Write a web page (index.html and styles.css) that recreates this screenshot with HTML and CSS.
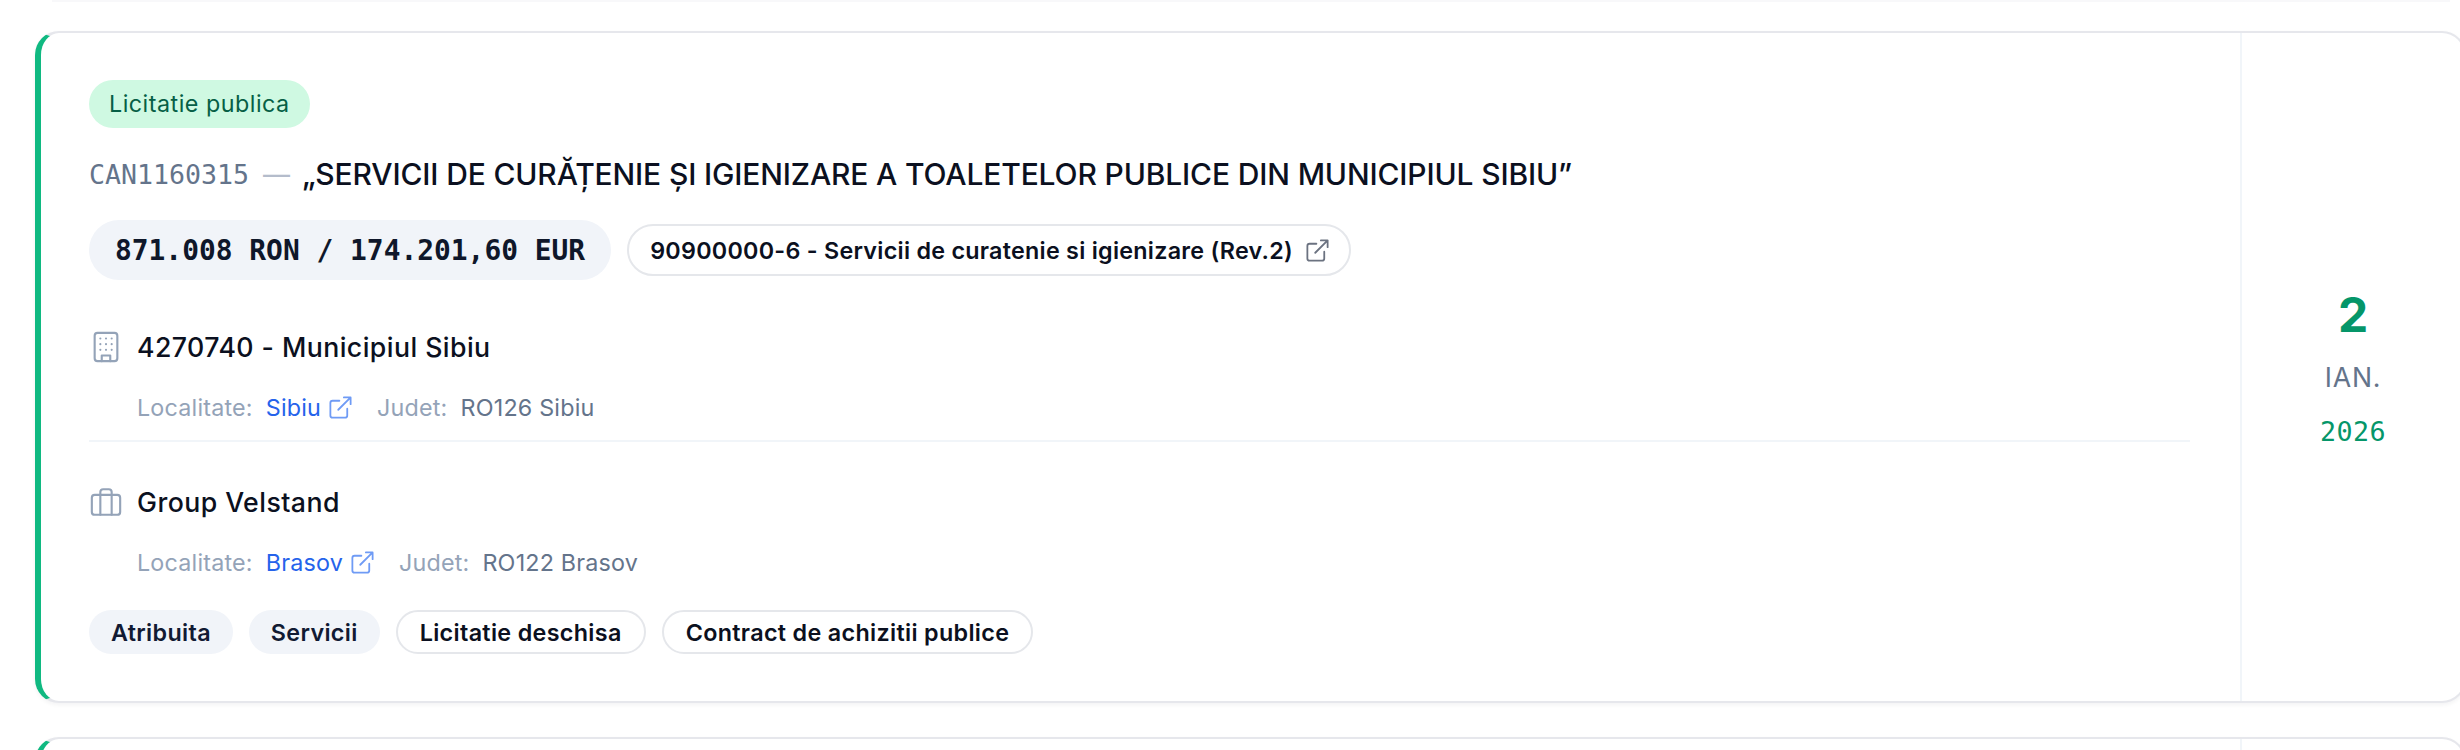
FILE: index.html
```html
<!DOCTYPE html>
<html lang="en">
<head>
    <meta charset="UTF-8">
    <meta name="viewport" content="width=device-width, initial-scale=1.0">
    <title>Licitatii</title>
    <link rel="stylesheet" href="styles.css">
</head>
<body>
    <div class="prev-edge"></div>

    <article class="card">
        <div class="card-main">
            <span class="type-pill">Licitatie publica</span>

            <h2 class="title">
                <span class="code">CAN1160315</span>
                <span class="dash">—</span>
                <span>„SERVICII DE CURĂȚENIE ȘI IGIENIZARE A TOALETELOR PUBLICE DIN MUNICIPIUL SIBIU”</span>
            </h2>

            <div class="value-row">
                <span class="price">871.008 RON / 174.201,60 EUR</span>
                <a class="cpv" href="#">
                    90900000-6 - Servicii de curatenie si igienizare (Rev.2)
                    <svg class="icon-ext" viewBox="0 0 24 24"><path d="M15 3h6v6M10 14 21 3M18 13v6a2 2 0 0 1-2 2H5a2 2 0 0 1-2-2V8a2 2 0 0 1 2-2h6"/></svg>
                </a>
            </div>

            <section class="party party-first">
                <div class="party-name">
                    <svg class="icon-party" viewBox="0 0 24 24"><rect x="4" y="2" width="16" height="20" rx="2"/><path d="M9 22v-4h6v4M8 6h.01M16 6h.01M12 6h.01M12 10h.01M12 14h.01M16 10h.01M16 14h.01M8 10h.01M8 14h.01"/></svg>
                    <span>4270740 - Municipiul Sibiu</span>
                </div>
                <div class="party-meta">
                    <span class="meta-item">
                        <span class="meta-label">Localitate:</span>
                        <a class="meta-link" href="#">Sibiu</a>
                        <svg class="icon-link" viewBox="0 0 24 24"><path d="M15 3h6v6M10 14 21 3M18 13v6a2 2 0 0 1-2 2H5a2 2 0 0 1-2-2V8a2 2 0 0 1 2-2h6"/></svg>
                    </span>
                    <span class="meta-item">
                        <span class="meta-label">Judet:</span>
                        <span class="meta-value">RO126 Sibiu</span>
                    </span>
                </div>
            </section>

            <section class="party">
                <div class="party-name">
                    <svg class="icon-party" viewBox="0 0 24 24"><rect x="2" y="7" width="20" height="14" rx="2"/><path d="M16 21V5a2 2 0 0 0-2-2h-4a2 2 0 0 0-2 2v16"/></svg>
                    <span>Group Velstand</span>
                </div>
                <div class="party-meta">
                    <span class="meta-item">
                        <span class="meta-label">Localitate:</span>
                        <a class="meta-link" href="#">Brasov</a>
                        <svg class="icon-link" viewBox="0 0 24 24"><path d="M15 3h6v6M10 14 21 3M18 13v6a2 2 0 0 1-2 2H5a2 2 0 0 1-2-2V8a2 2 0 0 1 2-2h6"/></svg>
                    </span>
                    <span class="meta-item">
                        <span class="meta-label">Judet:</span>
                        <span class="meta-value">RO122 Brasov</span>
                    </span>
                </div>
            </section>

            <div class="tags">
                <span class="tag tag-fill">Atribuita</span>
                <span class="tag tag-fill">Servicii</span>
                <span class="tag tag-line">Licitatie deschisa</span>
                <span class="tag tag-line">Contract de achizitii publice</span>
            </div>
        </div>

        <aside class="card-date">
            <span class="day">2</span>
            <span class="month">IAN.</span>
            <span class="year">2026</span>
        </aside>
    </article>

    <article class="card card-next">
        <div class="card-main"></div>
        <aside class="card-date"></aside>
    </article>
</body>
</html>
```

FILE: styles.css
```css
html, body {
    overflow: hidden;
}
body {
    margin: 0;
    width: 2460px;
    height: 750px;
    background-color: #fff;
    font-family: Inter, "Noto Sans", sans-serif;
    color: #0b1020;
}
a {
    text-decoration: none;
}
.prev-edge {
    height: 2px;
    margin: 0 10px 29px 52px;
    background-color: #f8f8fa;
}
.card {
    display: flex;
    box-sizing: border-box;
    width: 2431px;
    height: 672px;
    margin: 0 0 34px 35px;
    background-color: #fff;
    border: 2px solid #e6e7ec;
    border-left: 6px solid #10b981;
    border-radius: 24px;
    box-shadow: 0 2px 4px rgba(15, 23, 42, 0.05);
}
.card-next {
    height: 300px;
}
.card-main {
    flex: 1;
    min-width: 0;
    padding: 47px 50px 0 48px;
}
.card-date {
    display: flex;
    flex-direction: column;
    align-items: center;
    justify-content: center;
    box-sizing: border-box;
    width: 224px;
    padding-top: 2px;
    border-left: 2px solid #f1f5f9;
}
.type-pill {
    display: inline-block;
    box-sizing: border-box;
    height: 48px;
    padding: 0 20px;
    border-radius: 24px;
    background-color: #cff9e2;
    color: #065f46;
    font-size: 23.3px;
    letter-spacing: 0.5px;
    line-height: 48px;
}
.title {
    display: flex;
    align-items: center;
    height: 44px;
    margin: 24px 0 0;
    font-size: 30px;
    font-weight: 500;
    letter-spacing: -0.15px;
}
.code {
    color: #64748b;
    font-family: "DejaVu Sans Mono", monospace;
    font-size: 26.6px;
    font-weight: 400;
    letter-spacing: 0;
}
.dash {
    margin: 0 12px 0 14px;
    color: #b4bccb;
    font-size: 27px;
    font-weight: 400;
}
.value-row {
    display: flex;
    align-items: center;
    gap: 16px;
    margin-top: 24px;
}
.price {
    box-sizing: border-box;
    height: 60px;
    padding: 0 26px;
    border-radius: 30px;
    background-color: #f1f4f9;
    color: #0f172a;
    font-family: "DejaVu Sans Mono", monospace;
    font-size: 27.9px;
    font-weight: 700;
    line-height: 62px;
}
.cpv {
    display: flex;
    align-items: center;
    gap: 11px;
    box-sizing: border-box;
    height: 52px;
    padding: 0 18px 0 21px;
    border: 2px solid #e5e7eb;
    border-radius: 26px;
    color: #0b1020;
    font-size: 23.3px;
    font-weight: 600;
    letter-spacing: 0.27px;
}
.icon-ext {
    width: 27px;
    height: 27px;
    fill: none;
    stroke: #6b7280;
    stroke-width: 1.6;
    stroke-linecap: round;
    stroke-linejoin: round;
}
.party-first {
    margin-top: 50px;
    padding-bottom: 17px;
    border-bottom: 2px solid #f1f5f9;
}
.party + .party {
    margin-top: 43px;
}
.party-name {
    display: flex;
    align-items: center;
    gap: 14px;
    height: 34px;
    font-size: 26.7px;
    font-weight: 500;
    letter-spacing: 0.44px;
}
.icon-party {
    width: 34px;
    height: 34px;
    fill: none;
    stroke: #94a3b8;
    stroke-width: 1.5;
    stroke-linecap: round;
    stroke-linejoin: round;
}
.party-meta {
    display: flex;
    gap: 23px;
    margin-top: 27px;
    padding-left: 48px;
    height: 32px;
    align-items: center;
    font-size: 23.3px;
    letter-spacing: 0.2px;
}
.meta-item {
    display: flex;
    align-items: center;
    gap: 13px;
}
.meta-item .icon-link {
    margin-left: -7px;
}
.meta-label {
    color: #94a3b8;
}
.meta-link {
    color: #2563eb;
}
.meta-value {
    color: #64748b;
}
.icon-link {
    width: 27px;
    height: 27px;
    fill: none;
    stroke: #6f9bf5;
    stroke-width: 1.6;
    stroke-linecap: round;
    stroke-linejoin: round;
}
.tags {
    display: flex;
    gap: 16px;
    margin-top: 32px;
}
.tag {
    display: flex;
    align-items: center;
    box-sizing: border-box;
    height: 44px;
    padding: 0 22px;
    border-radius: 22px;
    font-size: 23.3px;
    font-weight: 600;
    letter-spacing: 0.34px;
}
.tag-fill {
    background-color: #f1f4f9;
    color: #111a33;
}
.tag-line {
    border: 2px solid #e5e7eb;
    color: #0b1020;
}
.day {
    color: #059669;
    font-size: 48px;
    font-weight: 700;
    line-height: 58px;
}
.month {
    margin-top: 15px;
    color: #64748b;
    font-size: 26.7px;
    letter-spacing: 0.8px;
    line-height: 36px;
}
.year {
    margin-top: 19px;
    color: #059669;
    font-family: "DejaVu Sans Mono", monospace;
    font-size: 26.7px;
    letter-spacing: 0.4px;
    line-height: 36px;
}
```
